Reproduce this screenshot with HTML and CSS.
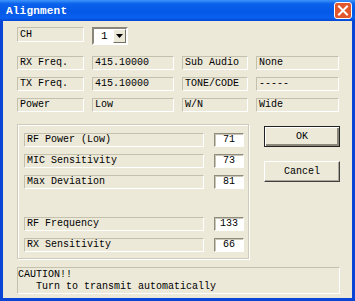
FILE: index.html
```html
<!DOCTYPE html>
<html lang="en">
<head>
    <meta charset="UTF-8">
    <title>Alignment</title>
    <link rel="stylesheet" href="styles.css">
</head>
<body>
    <div class="window">
        <div class="titlebar">
            <span class="title">Alignment</span>
            <span class="close">
                <svg width="18" height="17" viewBox="0 0 18 17">
                    <rect x="0.5" y="0.5" width="17" height="16" rx="2.5" fill="#e2562c" stroke="#fff"/>
                    <path d="M5 4.5 L13 12.5 M13 4.5 L5 12.5" stroke="#fff" stroke-width="2" stroke-linecap="square"/>
                </svg>
            </span>
        </div>

        <div class="client">
            <!-- channel -->
            <div class="ch-row">
                <div class="static">CH</div>
                <div class="combo">
                    <span class="combo-text">1</span>
                    <span class="drop">
                        <svg width="7" height="4" viewBox="0 0 7 4"><path d="M0 0 H7 L3.5 4 Z" fill="#000"/></svg>
                    </span>
                </div>
            </div>

            <!-- channel info -->
            <div class="info-grid">
                <div class="static">RX Freq.</div>
                <div class="static">415.10000</div>
                <div class="static">Sub Audio</div>
                <div class="static">None</div>
                <div class="static">TX Freq.</div>
                <div class="static">415.10000</div>
                <div class="static">TONE/CODE</div>
                <div class="static">-----</div>
                <div class="static">Power</div>
                <div class="static">Low</div>
                <div class="static">W/N</div>
                <div class="static">Wide</div>
            </div>

            <div class="lower">
                <div class="group">
                    <div class="tune-row">
                        <div class="static tune-label">RF Power (Low)</div>
                        <div class="value">71</div>
                    </div>
                    <div class="tune-row">
                        <div class="static tune-label">MIC Sensitivity</div>
                        <div class="value">73</div>
                    </div>
                    <div class="tune-row">
                        <div class="static tune-label">Max Deviation</div>
                        <div class="value">81</div>
                    </div>
                    <div class="tune-row spaced">
                        <div class="static tune-label">RF Frequency</div>
                        <div class="value">133</div>
                    </div>
                    <div class="tune-row">
                        <div class="static tune-label">RX Sensitivity</div>
                        <div class="value">66</div>
                    </div>
                </div>
                <div class="buttons">
                    <button class="btn default">OK</button>
                    <button class="btn">Cancel</button>
                </div>
            </div>

            <div class="caution">CAUTION!!
   Turn to transmit automatically</div>
        </div>
    </div>
</body>
</html>
```

FILE: styles.css
```css
body {
    margin: 0;
    font-family: "Liberation Mono", "Courier New", monospace;
    font-size: 10px;
    color: #000;
}
.window {
    width: 355px;
    height: 301px;
    box-sizing: border-box;
    background: #ece9d8;
    border: 3px solid #0a46d6;
    border-top: none;
    display: flex;
    flex-direction: column;
}
.titlebar {
    height: 21px;
    margin: 0 -3px;
    padding: 0 3px 0 6px;
    display: flex;
    align-items: center;
    justify-content: space-between;
    background: linear-gradient(to bottom, #3f95fb 0%, #0b62ec 18%, #0458e6 55%, #0a60ef 85%, #0447d4 100%);
}
.title {
    color: #fff;
    font-weight: bold;
    font-size: 11px;
    letter-spacing: 0.2px;
}
.close {
    display: flex;
    height: 17px;
}
.client {
    flex: 1;
    padding: 6px 12px 0 14px;
}
.static {
    height: 14px;
    box-sizing: border-box;
    border: 1px solid;
    border-color: #c4c0ae #fff #fff #c4c0ae;
    padding-left: 2px;
    line-height: 12px;
    white-space: nowrap;
}
.ch-row {
    display: flex;
    gap: 8px;
    align-items: flex-start;
}
.ch-row .static {
    width: 67px;
    height: 15px;
    line-height: 13px;
}
.combo {
    width: 36px;
    height: 18px;
    box-sizing: border-box;
    background: #fff;
    border: 2px solid;
    border-color: #8a877a #fff #fff #8a877a;
    display: flex;
    align-items: center;
    justify-content: space-between;
}
.combo-text {
    padding-left: 7px;
    font-size: 11px;
}
.drop {
    width: 13px;
    height: 14px;
    box-sizing: border-box;
    background: #ece9d8;
    border: 1px solid;
    border-color: #fff #716f64 #716f64 #fff;
    display: flex;
    align-items: center;
    justify-content: center;
}
.info-grid {
    margin-top: 11px;
    display: grid;
    grid-template-columns: 67px 82px 66px 83px;
    column-gap: 8px;
    row-gap: 7px;
}
.lower {
    margin-top: 12px;
    display: flex;
    align-items: flex-start;
    gap: 15px;
}
.group {
    width: 232px;
    height: 135px;
    box-sizing: border-box;
    border: 1px solid #cfcbba;
    box-shadow: 1px 1px 0 #fff, inset 1px 1px 0 #fff;
    padding: 8px 0 0 6px;
    display: flex;
    flex-direction: column;
    gap: 7px;
}
.tune-row {
    display: flex;
    gap: 10px;
}
.tune-row.spaced {
    margin-top: 21px;
}
.tune-label {
    width: 180px;
}
.value {
    width: 30px;
    height: 14px;
    box-sizing: border-box;
    background: #fff;
    border: 1px solid;
    border-color: #8f8c7d #fff #fff #8f8c7d;
    box-shadow: inset 1px 1px 0 #c9c6b6;
    text-align: center;
    line-height: 12px;
}
.buttons {
    padding-top: 2px;
    display: flex;
    flex-direction: column;
    gap: 14px;
}
.btn {
    width: 76px;
    height: 21px;
    box-sizing: border-box;
    font-family: "Liberation Mono", "Courier New", monospace;
    font-size: 10px;
    color: #000;
    background: #ece9d8;
    border: 1px solid;
    border-color: #fff #404040 #404040 #fff;
    box-shadow: inset -1px -1px 0 #aca899;
    padding: 0;
}
.btn.default {
    border: 1px solid #222;
    box-shadow: inset 1px 1px 0 #fff, inset -2px -2px 0 #8a877a;
}
.caution {
    margin-top: 8px;
    height: 27px;
    box-sizing: border-box;
    border: 1px solid;
    border-color: #c4c0ae #fff #fff #c4c0ae;
    padding: 1px 0 0 0;
    line-height: 12px;
    white-space: pre;
}
```
